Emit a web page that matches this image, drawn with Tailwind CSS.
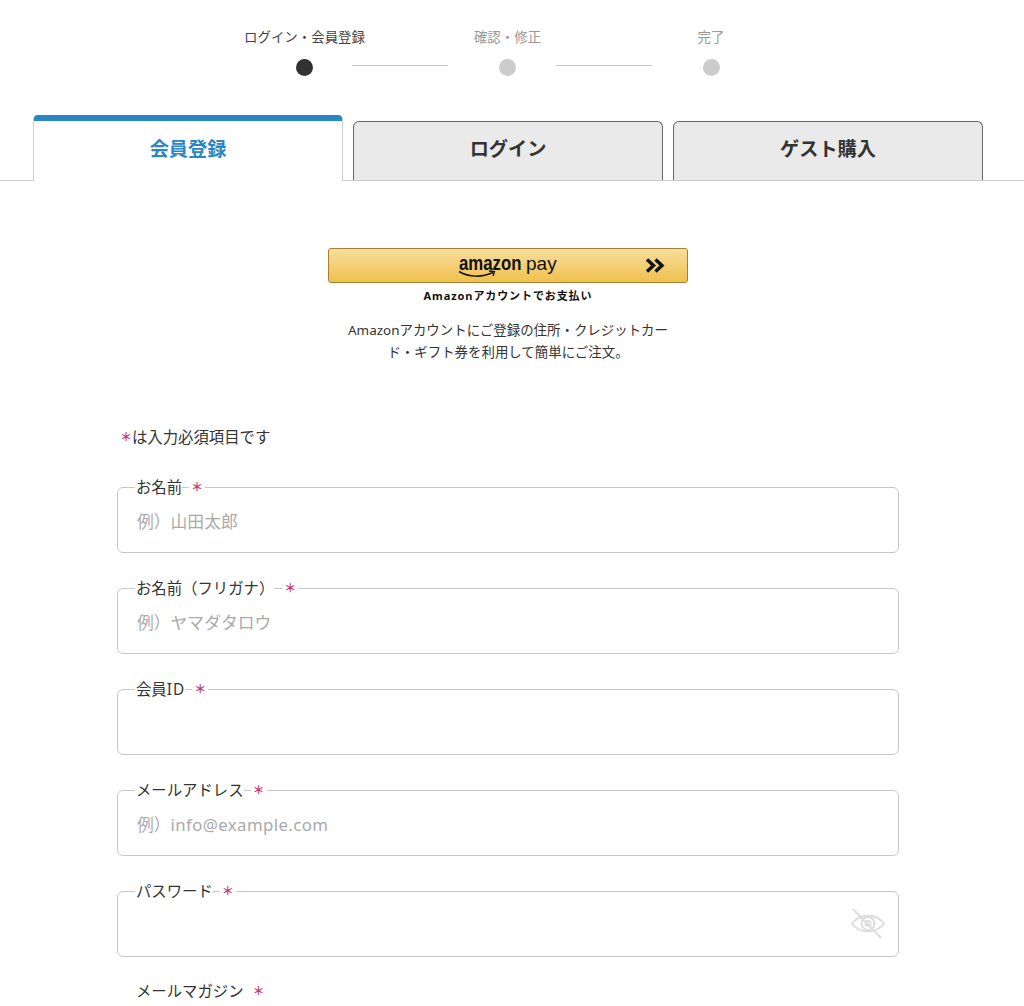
<!DOCTYPE html>
<html lang="ja"><head><meta charset="utf-8">
<script src="https://cdn.jsdelivr.net/npm/@tailwindcss/browser@4"></script>
</head>
<body class="bg-white overflow-hidden h-[1006px] font-['Noto_Sans','Noto_Sans_CJK_JP',sans-serif] text-[#333]">
<!-- stepper -->
<div class="h-[115px] pt-[27px] relative">
  <div class="w-[610px] ml-[203px] grid grid-cols-[203px_203px_204px] justify-items-center">
    <div class="text-[13.44px] leading-[20px] text-[#444] whitespace-nowrap">ログイン・会員登録</div>
    <div class="text-[13.44px] leading-[20px] text-[#999] whitespace-nowrap">確認・修正</div>
    <div class="text-[13.44px] leading-[20px] text-[#999] whitespace-nowrap">完了</div>
  </div>
  <div class="flex items-center ml-[296px] mt-[12px] h-[17px]">
    <span class="w-[17px] h-[17px] rounded-full bg-[#333]"></span>
    <span class="w-[96px] h-px bg-[#c8c8c8] ml-[39px] -translate-y-[2px]"></span>
    <span class="w-[17px] h-[17px] rounded-full bg-[#ccc] ml-[51px]"></span>
    <span class="w-[96px] h-px bg-[#c8c8c8] ml-[40px] -translate-y-[2px]"></span>
    <span class="w-[17px] h-[17px] rounded-full bg-[#ccc] ml-[51px]"></span>
  </div>
</div>
<!-- tabs -->
<div class="h-[66px] border-b border-[#ccc] flex items-end pl-[33px] gap-[10px]">
  <div class="w-[310px] h-[66px] -mb-px bg-white rounded-t-[5px] border-x border-[#ccc] border-t-[6px] border-t-[#2a86c6] flex items-center justify-center text-[19.2px] font-bold text-[#2a86c6]"><span class="-translate-y-[2px]">会員登録</span></div>
  <div class="w-[310px] h-[59px] bg-[#eaeaea] rounded-t-[6px] border border-b-0 border-[#666] flex items-center justify-center text-[19.2px] font-bold text-[#333]"><span class="-translate-y-[2px]">ログイン</span></div>
  <div class="w-[310px] h-[59px] bg-[#eaeaea] rounded-t-[6px] border border-b-0 border-[#666] flex items-center justify-center text-[19.2px] font-bold text-[#333]"><span class="-translate-y-[2px]">ゲスト購入</span></div>
</div>
<!-- amazon -->
<div class="flex flex-col items-center pt-[67px] ml-[-8px]">
  <div class="relative w-[360px] h-[35px] rounded-[3px] border border-[#a5812f] bg-gradient-to-b from-[#f7dd9a] to-[#f0c14b]">
    <span class="absolute left-[130px] top-[2px] text-[#111] leading-[24px] whitespace-nowrap flex items-baseline font-['Liberation_Sans',sans-serif]"><b class="font-bold text-[20px] inline-block w-[63px] origin-left scale-x-[0.84]">amazon</b><span class="text-[19px] ml-[4px]">pay</span></span>
    <svg class="absolute left-[129px] top-[21px]" width="46" height="9" viewBox="0 0 46 9" fill="none"><path d="M1 1.500C11 7.500 24 7.500 35 2.500" stroke="#111" stroke-width="1.500"/><path d="M31 1L36.500 1.500L35 6" stroke="#111" stroke-width="1.300"/></svg>
    <svg class="absolute left-[316px] top-[9px]" width="20" height="15" viewBox="0 0 20 15" fill="none" stroke="#111" stroke-width="3.400"><path d="M2 1.500L8.500 7.500L2 13.500"/><path d="M10.500 1.500L17 7.500L10.500 13.500"/></svg>
  </div>
  <div class="mt-[5px] text-[11px] leading-[16px] font-bold text-[#111] tracking-[0.9px]">Amazonアカウントでお支払い</div>
  <div class="mt-[15px] text-center text-[13.44px] leading-[22px] text-[#333] whitespace-nowrap">Amazonアカウントにご登録の住所・クレジットカー<br>ド・ギフト券を利用して簡単にご注文。</div>
</div>
<!-- form -->
<div class="ml-[117px] w-[782px] mt-[66px]">
  <div class="text-[15.36px] leading-[20px] pl-[3px] flex items-center h-[20px] -mt-px"><span class="text-[#cb3a72] w-[12px] text-[12px] font-bold text-center">＊</span>は入力必須項目です</div>
  <div class="mt-[39px] flex flex-col gap-[35px]">
    <div class="relative h-[66px] rounded-[6px] border border-[#c8c8c8] pl-[19px] pt-[3px] flex items-center text-[16.8px] text-[#aaa]">
      <div class="absolute left-[17px] -top-[10px] h-[20px] flex items-center text-[15.36px] text-[#333] leading-none"><span class="bg-white pl-px">お名前</span><span class="ml-[7px] px-[2px] bg-white text-[#cb3a72] text-[12px] font-bold">＊</span></div>
      例）山田太郎
    </div>
    <div class="relative h-[66px] rounded-[6px] border border-[#c8c8c8] pl-[19px] pt-[3px] flex items-center text-[16.8px] text-[#aaa]">
      <div class="absolute left-[17px] -top-[10px] h-[20px] flex items-center text-[15.36px] text-[#333] leading-none"><span class="bg-white pl-px">お名前（フリガナ）</span><span class="ml-[8px] px-[2px] bg-white text-[#cb3a72] text-[12px] font-bold">＊</span></div>
      例）ヤマダタロウ
    </div>
    <div class="relative h-[66px] rounded-[6px] border border-[#c8c8c8] pl-[19px] pt-[3px] flex items-center text-[16.8px] text-[#aaa]">
      <div class="absolute left-[17px] -top-[10px] h-[20px] flex items-center text-[15.36px] text-[#333] leading-none"><span class="bg-white pl-px">会員<span class="tracking-[1px]">ID</span></span><span class="ml-[7px] px-[2px] bg-white text-[#cb3a72] text-[12px] font-bold">＊</span></div>
    </div>
    <div class="relative h-[66px] rounded-[6px] border border-[#c8c8c8] pl-[19px] pt-[3px] flex items-center text-[16.8px] text-[#aaa]">
      <div class="absolute left-[17px] -top-[10px] h-[20px] flex items-center text-[15.36px] text-[#333] leading-none"><span class="bg-white pl-px">メールアドレス</span><span class="ml-[7px] px-[2px] bg-white text-[#cb3a72] text-[12px] font-bold">＊</span></div>
      <span>例）<span class="tracking-[0.4px]">info@example.com</span></span>
    </div>
    <div class="relative h-[66px] rounded-[6px] border border-[#c8c8c8] pl-[19px] pt-[3px] flex items-center text-[16.8px] text-[#aaa]">
      <div class="absolute left-[17px] -top-[10px] h-[20px] flex items-center text-[15.36px] text-[#333] leading-none"><span class="bg-white pl-px">パスワード</span><span class="ml-[7px] px-[2px] bg-white text-[#cb3a72] text-[12px] font-bold">＊</span></div>
      <svg class="absolute right-[13px] top-[16px]" width="34" height="31" viewBox="0 0 34 31" fill="none" stroke="#ddd" stroke-width="2"><path d="M1 15.500C9 5 25 5 33 15.500C25 26 9 26 1 15.500Z"/><circle cx="17" cy="15.500" r="6.500"/><circle cx="17" cy="15.500" r="2.500"/><path d="M2 1L30 30"/></svg>
    </div>
    <div class="relative flex items-center text-[15.36px] text-[#333] pl-[19px] -mt-[10px] h-[20px] leading-[20px]">メールマガジン<span class="ml-[9px] text-[#cb3a72] text-[12px] font-bold">＊</span></div>
  </div>
</div>
</body></html>
